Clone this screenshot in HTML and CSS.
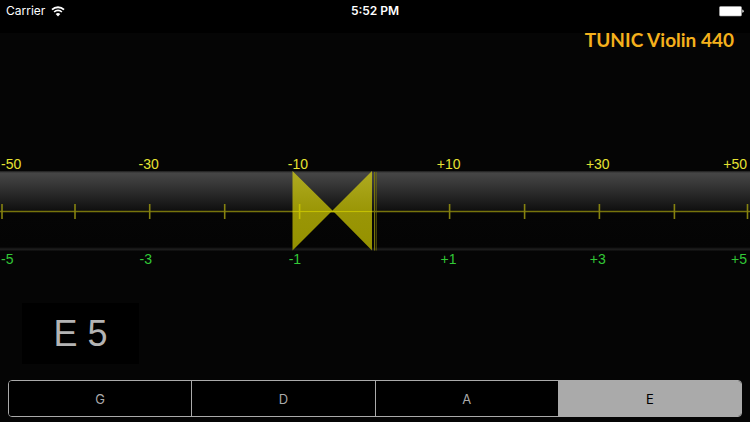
FILE: index.html
```html
<!DOCTYPE html>
<html lang="en">
<head>
    <meta charset="UTF-8">
    <meta name="viewport" content="width=device-width, initial-scale=1.0">
    <title>TUNIC Violin 440</title>
    <link rel="stylesheet" href="styles.css">
</head>
<body>

    <header class="status-bar">
        <div class="carrier">
            <span>Carrier</span>
            <svg class="wifi" width="14" height="11" viewBox="0 0 14 11">
                <path d="M1 3.6 A8.8 8.8 0 0 1 13 3.6" fill="none" stroke="#fff" stroke-width="1.8"/>
                <path d="M3.1 6 A5.6 5.6 0 0 1 10.9 6" fill="none" stroke="#fff" stroke-width="1.6"/>
                <path d="M7 10.4 L4.7 8 A3.3 3.3 0 0 1 9.3 8 Z" fill="#fff"/>
            </svg>
        </div>
        <div class="clock">5:52 PM</div>
        <svg class="battery" width="25" height="11" viewBox="0 0 25 11">
            <rect x="0.5" y="0.5" width="22" height="9.5" rx="1" fill="#fff" stroke="#aaa" stroke-width="0.6"/>
            <path d="M23.2 3.6 Q24.8 4 24.8 5.2 Q24.8 6.4 23.2 6.8 Z" fill="#ccc"/>
        </svg>
    </header>

    <main class="tuner">
        <h1>TUNIC Violin 440</h1>

        <section class="gauge">
            <div class="scale coarse">
                <span>-50</span>
                <span class="flat">-30</span>
                <span class="flat">-10</span>
                <span>+10</span>
                <span>+30</span>
                <span>+50</span>
            </div>
            <div class="band">
                <svg class="needle" viewBox="0 0 750 80" preserveAspectRatio="none">
                    <defs>
                        <linearGradient id="bow" x1="0" y1="0" x2="0" y2="1">
                            <stop offset="0" stop-color="#b0ac22"/>
                            <stop offset="0.5" stop-color="#9a9606"/>
                            <stop offset="1" stop-color="#959100"/>
                        </linearGradient>
                    </defs>
                    <path d="M292.5 0 L332.5 39.5 L372 0 V79.5 L332.5 39.5 L292.5 79.5 Z" fill="url(#bow)"/>
                    <path d="M0 40.5 H750" stroke="#77740c" stroke-width="1.6"/>
                    <path d="M2 33 V48 M75 33 V48 M149.7 33 V48 M224.7 33 V48 M449.6 33 V48 M524.6 33 V48 M599.4 33 V48 M674.4 33 V48 M747.5 33 V48" stroke="#85820f" stroke-width="1.6"/>
                    <path d="M292.5 40.5 H372 M299.6 33 V48" stroke="#c4c002" stroke-width="1.6"/>
                    <path d="M374.5 1 V79.5" stroke="#77740a" stroke-width="1"/>
                    <path d="M376.2 1 V79.5" stroke="#77740a" stroke-width="0.8"/>
                </svg>
            </div>
            <div class="scale fine">
                <span>-5</span>
                <span class="flat">-3</span>
                <span class="flat">-1</span>
                <span>+1</span>
                <span>+3</span>
                <span>+5</span>
            </div>
        </section>

        <output class="note">E 5</output>

        <div class="strings">
            <button type="button">G</button>
            <button type="button">D</button>
            <button type="button">A</button>
            <button type="button" class="selected">E</button>
        </div>
    </main>

    <script>
        const buttons = document.querySelectorAll('.strings button');
        buttons.forEach(button => button.addEventListener('click', () => {
            buttons.forEach(b => b.classList.remove('selected'));
            button.classList.add('selected');
        }));
    </script>

</body>
</html>
```
FILE: styles.css
```css
* {
    box-sizing: border-box;
}
body {
    margin: 0;
    background-color: #000;
    color: #fff;
    font-family: "Liberation Sans", Arial, sans-serif;
}
.status-bar {
    display: grid;
    grid-template-columns: 1fr auto 1fr;
    align-items: center;
    height: 22px;
    padding: 0 6px;
    font-family: Inter, sans-serif;
    font-size: 12px;
    line-height: 22px;
}
.carrier {
    display: flex;
    align-items: center;
    gap: 6px;
}
.clock {
    font-weight: 600;
}
.battery {
    justify-self: end;
}
.tuner {
    margin-top: 11px;
    padding-bottom: 6px;
    background-color: #050505;
}
h1 {
    margin: 0;
    padding-right: 16px;
    color: #f5b11c;
    font-family: Lato, sans-serif;
    font-size: 19px;
    font-weight: bold;
    line-height: 14px;
    text-align: right;
}
.gauge {
    padding-top: 111px;
}
.scale {
    display: grid;
    grid-template-columns: 1fr 2fr 2fr 2fr 2fr 1fr;
    padding: 0 3px 0 1px;
    font-size: 14px;
    line-height: 13px;
    text-align: center;
}
.scale span:first-child {
    text-align: left;
}
.scale span:last-child {
    text-align: right;
}
.coarse {
    color: #e6e232;
}
.coarse .flat {
    padding-right: 3px;
}
.fine {
    padding-top: 2px;
    color: #32c836;
}
.fine .flat {
    padding-right: 9px;
}
.band {
    height: 80px;
    background: linear-gradient(#1c1c1c 0, #464646 2px, #363636 14px, #121212 38px, #050505 42px, #040404 76px, #1c1c1c 78px, #1c1c1c 79px, #050505 80px);
}
.needle {
    display: block;
    width: 100%;
    height: 80px;
}
.note {
    display: block;
    width: 117px;
    margin: 37px 0 0 22px;
    background-color: #000;
    color: #b4b4b4;
    font-size: 36px;
    line-height: 61px;
    text-align: center;
}
.strings {
    display: flex;
    height: 37px;
    margin: 16px 8px 0;
    border: 1px solid #aaa;
    border-radius: 4px;
    overflow: hidden;
}
.strings button {
    flex: 1;
    padding: 0;
    border: none;
    border-left: 1px solid #aaa;
    background-color: #000;
    color: #aaa;
    font-family: Inter, sans-serif;
    font-size: 13px;
    cursor: pointer;
}
.strings button:first-child {
    border-left: none;
}
.strings button.selected {
    background-color: #aaa;
    color: #000;
}
```
